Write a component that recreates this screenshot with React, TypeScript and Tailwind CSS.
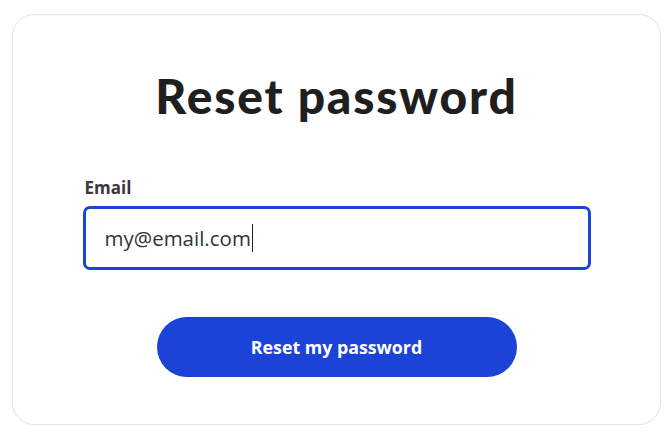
import React, { useState } from "react";

const App = () => {
  const [email] = useState("my@email.com");

  return (
    <div className="min-h-screen bg-white pt-[14px] pl-[12px]">
      <div className="w-[649px] h-[411px] rounded-[22px] border border-[#e3e3e3] bg-white flex flex-col items-center">
        <h1
          className="mt-[57px] text-[48px] leading-none font-black text-[#1f1f1f] tracking-[1.8px]"
          style={{ fontFamily: "Lato, sans-serif" }}
        >
          Reset password
        </h1>

        <form
          className="mt-[56px] w-[508px] flex flex-col"
          style={{ fontFamily: "'Open Sans', sans-serif" }}
          onSubmit={(e) => e.preventDefault()}
        >
          <label className="pl-[2px] text-[17px] leading-6 font-bold text-[#3b3640]">Email</label>
          <div className="mt-[6px] h-[64px] rounded-[7px] border-[3px] border-[#1a44d8] flex items-center pl-[19px]">
            <span className="text-[20.5px] text-[#333333]">{email}</span>
            <span className="ml-[1px] w-px h-[28px] bg-[#222222]" />
          </div>

          <button
            type="submit"
            className="mt-[47px] self-center w-[360px] h-[60px] rounded-full bg-[#1b43d8] text-white text-[17.8px] font-bold"
          >
            Reset my password
          </button>
        </form>
      </div>
    </div>
  );
};

export default App;
